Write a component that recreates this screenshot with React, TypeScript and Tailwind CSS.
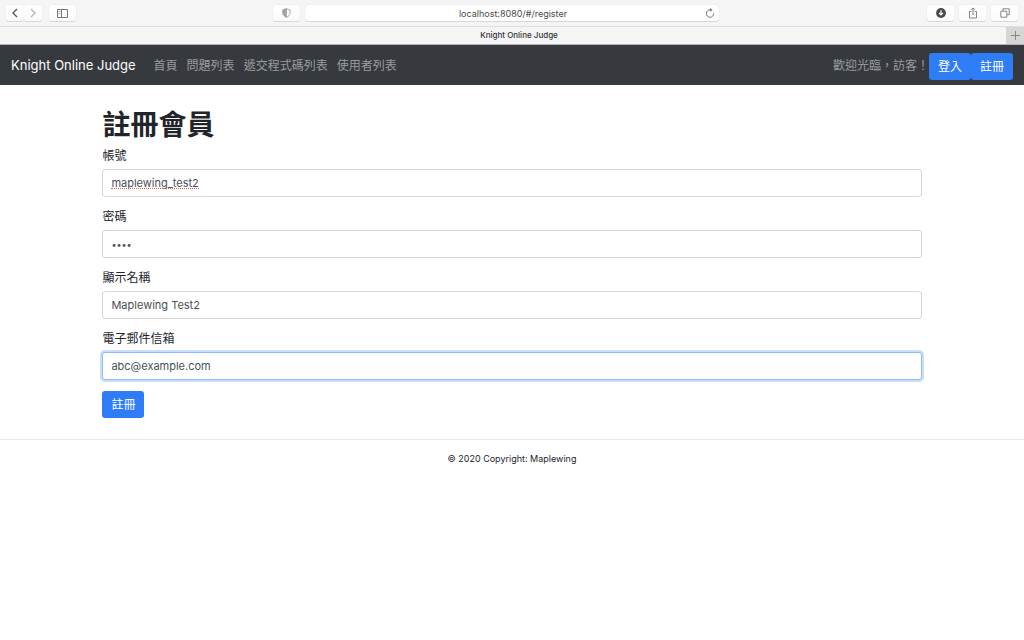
import React, { useState } from "react";

type ToolButtonProps = {
  label: string;
  className?: string;
  children: React.ReactNode;
};

function ToolButton({ label, className = "w-[27px]", children }: ToolButtonProps) {
  return (
    <button
      type="button"
      aria-label={label}
      className={`flex h-4 shrink-0 items-center justify-center rounded-[3px] bg-linear-to-b from-white to-[#fafafa] shadow-[0_0_1px_rgba(0,0,0,0.2),0_1px_0_rgba(0,0,0,0.1)] ${className}`}
    >
      {children}
    </button>
  );
}

function Toolbar() {
  return (
    <div className="flex h-[27px] items-center border-b border-[#dedede] bg-[#f5f5f5] px-1.5">
      <div className="flex flex-1 items-center">
        <div className="flex">
          <ToolButton label="Back" className="w-[18px]">
            <svg width="8" height="12" viewBox="0 0 8 12" fill="none" stroke="#555" strokeWidth="1.3">
              <path d="M6 2 2 6l4 4" />
            </svg>
          </ToolButton>
          <ToolButton label="Forward" className="w-[18px]">
            <svg width="8" height="12" viewBox="0 0 8 12" fill="none" stroke="#b4b4b4" strokeWidth="1.3">
              <path d="m2 2 4 4-4 4" />
            </svg>
          </ToolButton>
        </div>
        <div className="ml-[7px]">
          <ToolButton label="Sidebar">
            <svg width="11" height="9" viewBox="0 0 11 9" fill="none" stroke="#777" strokeWidth="1">
              <path d="M.5.5h10v8H.5zM4.5.5v8" />
              <path d="M1.500 2.500h2M1.500 4.500h2" stroke="#aaa" />
            </svg>
          </ToolButton>
        </div>
        <div className="mr-[5px] ml-auto">
          <ToolButton label="Privacy report">
            <svg width="9" height="10" viewBox="0 0 10 11" fill="none" stroke="#a4a4a4" strokeWidth="1">
              <path d="M5 .8 9 2v3.200C9 7.600 7.300 9.300 5 10.200 2.700 9.300 1 7.600 1 5.200V2z" />
              <path d="M5 .8 1 2v3.200c0 2.400 1.700 4.100 4 5z" fill="#a4a4a4" />
            </svg>
          </ToolButton>
        </div>
      </div>
      <div className="flex h-4 w-[41%] items-center rounded-[3px] bg-white pr-1 pl-4 shadow-[0_0_1px_rgba(0,0,0,0.2),0_1px_0_rgba(0,0,0,0.1)]">
        <input
          aria-label="Address"
          defaultValue="localhost:8080/#/register"
          spellCheck={false}
          className="w-full min-w-0 flex-1 bg-transparent pt-px text-center text-[9px] leading-4 text-[#4a4a4a] outline-none"
        />
        <button type="button" aria-label="Reload">
          <svg width="10" height="10" viewBox="0 0 10 10" fill="none" stroke="#777" strokeWidth="1">
            <path d="M5.500 1.900A3.700 3.700 0 1 0 8.700 5.300" />
            <path d="M5 0l2.600 1.900L5 3.800z" fill="#777" stroke="none" />
          </svg>
        </button>
      </div>
      <div className="flex flex-1 justify-end gap-[5px]">
        <ToolButton label="Downloads">
          <svg width="10" height="10" viewBox="0 0 10 10" fill="none">
            <circle cx="5" cy="5" r="4.900" fill="#4a4a4a" />
            <path d="M5 2.200v4.600M3 4.900 5 7l2-2.100" stroke="#fff" strokeWidth="1.200" />
          </svg>
        </ToolButton>
        <ToolButton label="Share">
          <svg width="10" height="12" viewBox="0 0 10 12" fill="none" stroke="#777" strokeWidth="0.9">
            <path d="M3.500 4.500h-2v6.500h7V4.500h-2M5 8V1M3 2.900 5 .9l2 2" />
          </svg>
        </ToolButton>
        <ToolButton label="Tab overview">
          <svg width="10" height="10" viewBox="0 0 10 10" fill="none" stroke="#777" strokeWidth="0.9">
            <path d="M.8 3.200h6v6h-6zM3 3V.8h6.200v6H7" />
          </svg>
        </ToolButton>
      </div>
    </div>
  );
}

function TabBar() {
  return (
    <div className="flex h-[18px] items-stretch border-b border-[#b4b4b4] bg-[#f5f5f5]">
      <div className="flex-1 pl-8 text-center text-[8px] leading-[17px] font-medium text-[#333]">
        Knight Online Judge
      </div>
      <button
        type="button"
        aria-label="New tab"
        className="flex w-[18px] items-center justify-center bg-[#d6d6d6]"
      >
        <svg width="9" height="9" viewBox="0 0 9 9" stroke="#888" strokeWidth="1">
          <path d="M4.500 0v9M0 4.500h9" />
        </svg>
      </button>
    </div>
  );
}

const links = [
  { text: "首頁", href: "#/" },
  { text: "問題列表", href: "#/problems" },
  { text: "遞交程式碼列表", href: "#/submissions" },
  { text: "使用者列表", href: "#/users" },
];

const blueButton =
  "flex h-[27px] w-[42px] items-center justify-center rounded-[3px] bg-[#2f7df6] pt-px text-xs text-white";

function Navbar() {
  return (
    <nav className="flex h-10 items-center bg-[#363a3e] px-[11px] pt-0.5 text-xs text-[#9a9c9e]">
      <a href="#/" className="text-[13px] text-white">
        Knight Online Judge
      </a>
      <ul className="ml-[18px] flex gap-[9px]">
        {links.map((link) => (
          <li key={link.href}>
            <a href={link.href}>{link.text}</a>
          </li>
        ))}
      </ul>
      <span className="ml-auto">歡迎光臨，訪客！</span>
      <a href="#/login" className={blueButton}>
        登入
      </a>
      <a href="#/register" className={blueButton}>
        註冊
      </a>
    </nav>
  );
}

type FieldProps = {
  id: string;
  label: string;
  type: string;
  initial: string;
  look?: string;
  misspelled?: boolean;
};

function Field({
  id,
  label,
  type,
  initial,
  look = "border-[#d3d7db] text-[11px]",
  misspelled = false,
}: FieldProps) {
  const [value, setValue] = useState(initial);
  return (
    <div className="mb-[11px]">
      <label htmlFor={id} className="mb-[5px] block text-xs leading-[17px]">
        {label}
      </label>
      <div className="relative">
        <input
          id={id}
          type={type}
          value={value}
          spellCheck={false}
          onChange={(e) => setValue(e.target.value)}
          className={`block h-7 w-full rounded-[3px] border bg-white px-2 text-[#495057] outline-none ${look}`}
        />
        {misspelled && value === initial && (
          <span
            aria-hidden="true"
            className="pointer-events-none absolute bottom-2 left-[9px] w-[88px] border-b border-dotted border-[#f2554f]"
          />
        )}
      </div>
    </div>
  );
}

export default function App() {
  return (
    <div
      lang="zh-Hant"
      className="min-h-screen bg-white font-['Inter','Noto_Sans_CJK_TC',sans-serif] text-[#212529]"
    >
      <header>
        <Toolbar />
        <TabBar />
        <Navbar />
      </header>
      <main className="mx-auto w-4/5 pt-[22px]">
        <h1 className="mb-1.5 text-[28px] leading-9 font-bold">註冊會員</h1>
        <form className="-mt-0.5" onSubmit={(e) => e.preventDefault()}>
          <Field id="account" label="帳號" type="text" initial="maplewing_test2" misspelled />
          <Field
            id="password"
            label="密碼"
            type="password"
            initial="test"
            look="border-[#d3d7db] text-[9px]"
          />
          <Field id="name" label="顯示名稱" type="text" initial="Maplewing Test2" />
          <Field
            id="email"
            label="電子郵件信箱"
            type="email"
            initial="abc@example.com"
            look="border-[#8fbcf7] text-[11px] shadow-[0_0_0_2px_#c8defc]"
          />
          <button type="submit" className={blueButton}>
            註冊
          </button>
        </form>
      </main>
      <footer className="mt-[21px] border-t border-[#e9e9e9] py-3 text-center text-[9px] leading-[14px]">
        © 2020 Copyright: Maplewing
      </footer>
    </div>
  );
}
